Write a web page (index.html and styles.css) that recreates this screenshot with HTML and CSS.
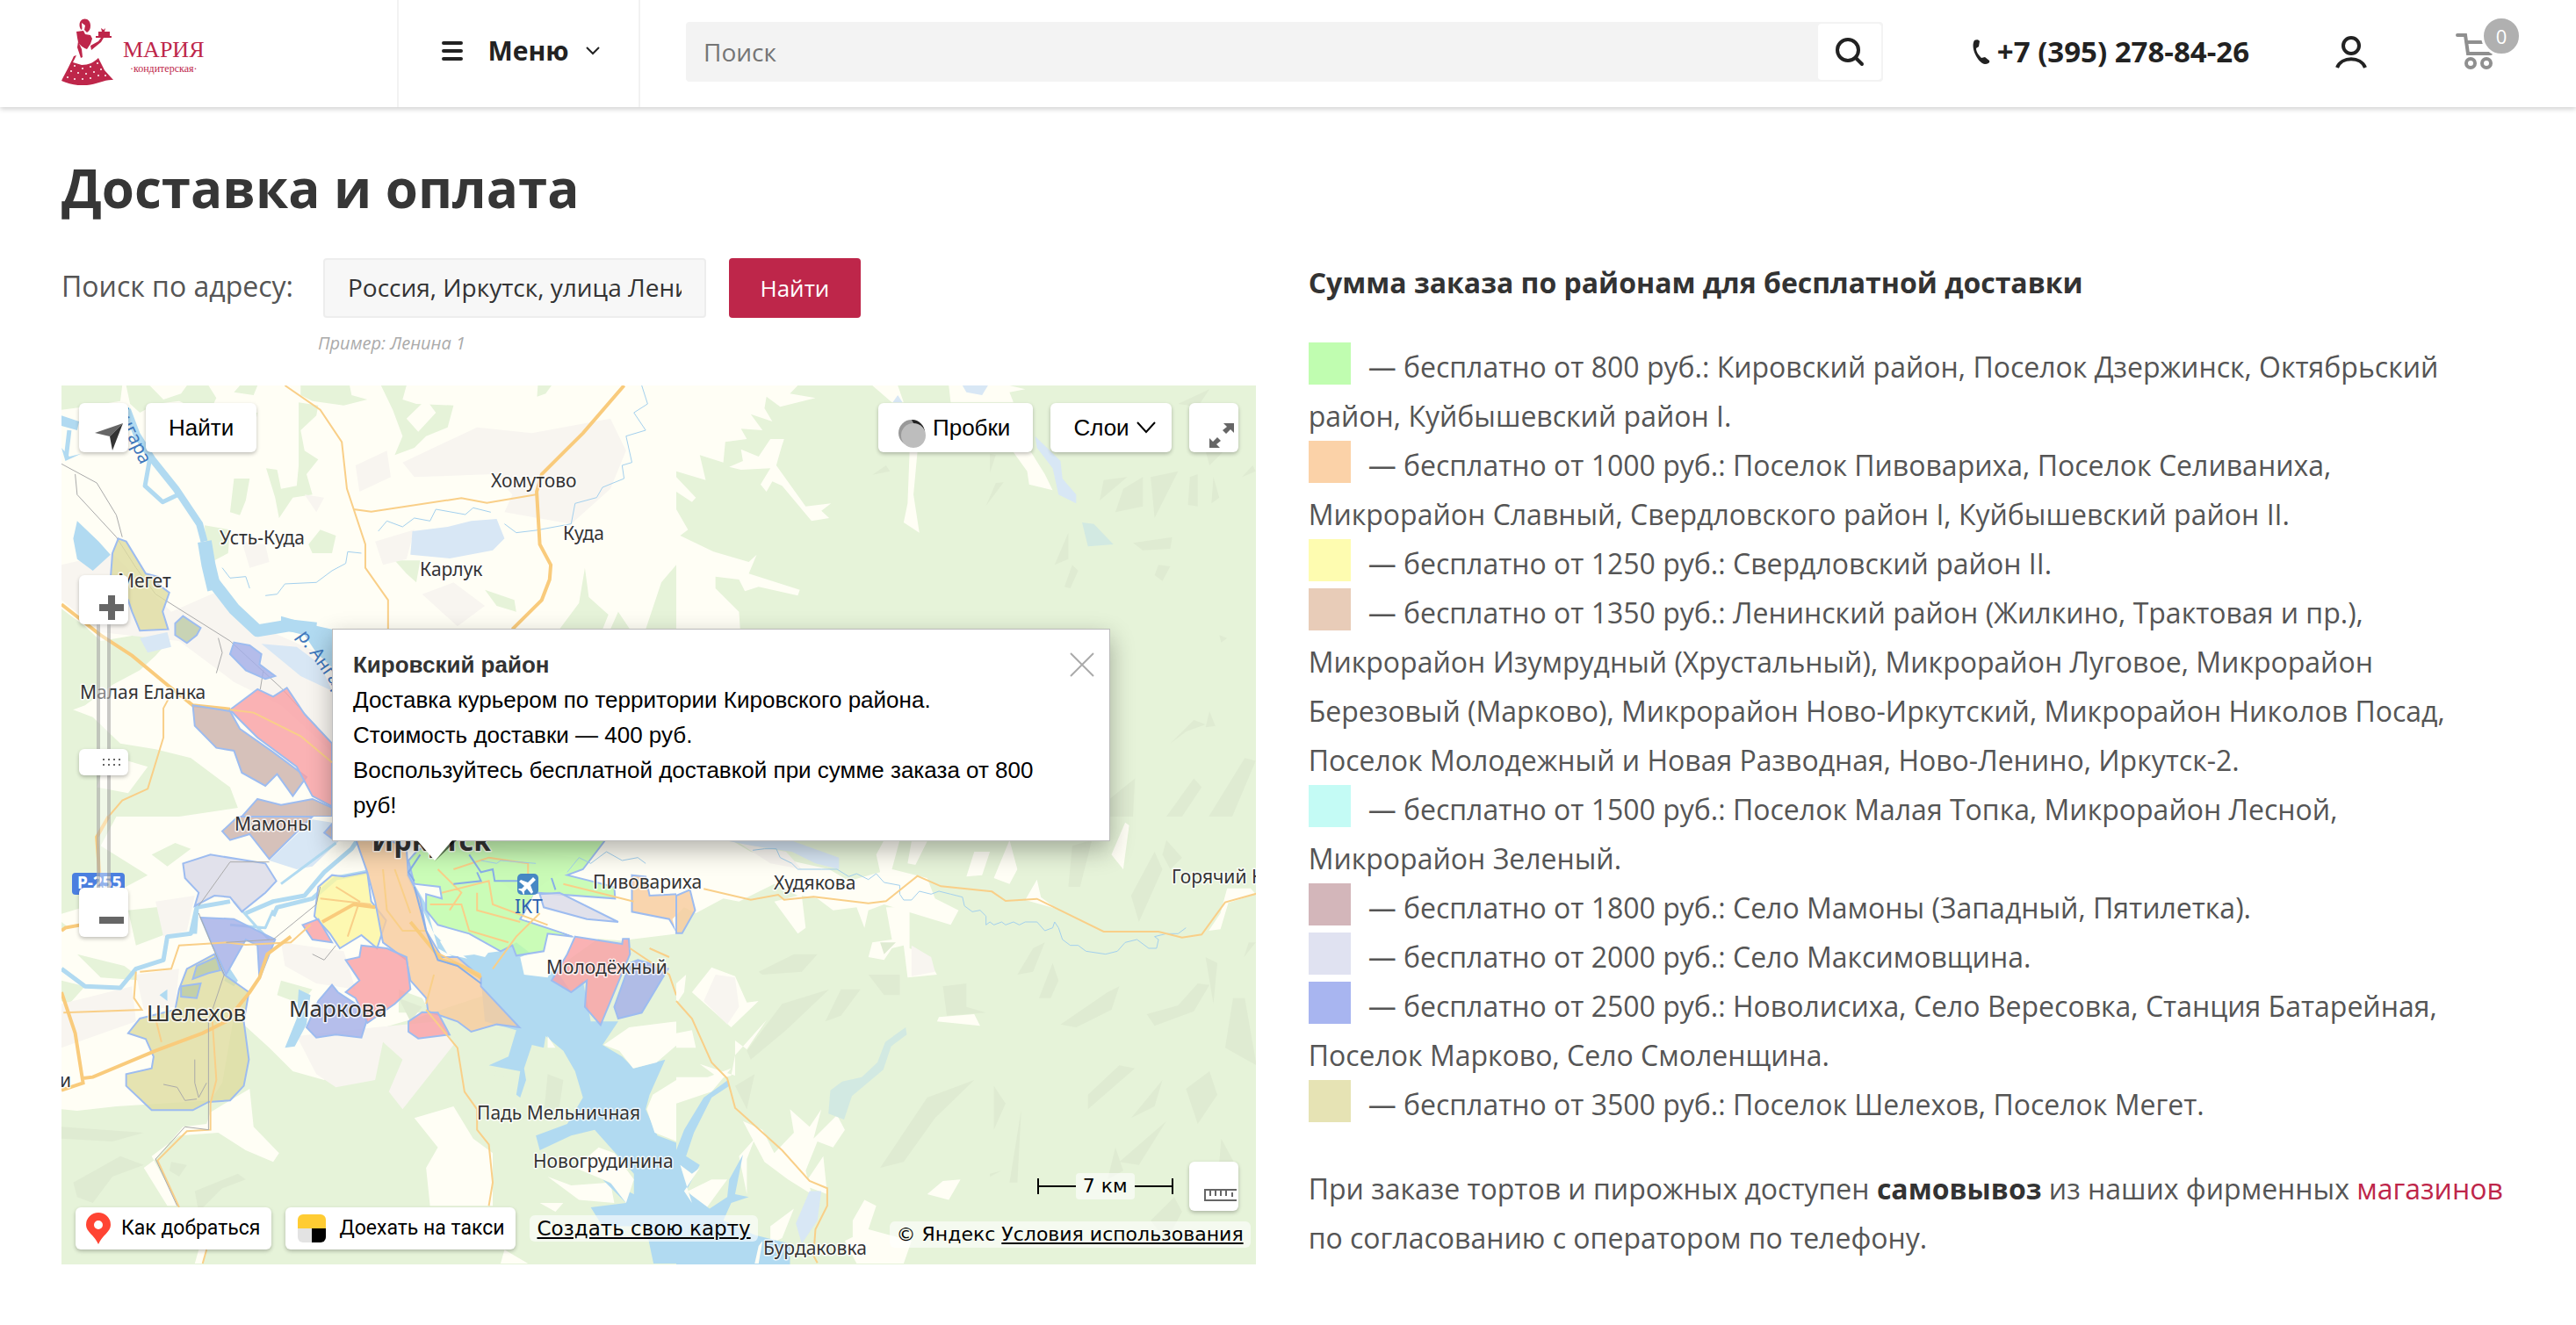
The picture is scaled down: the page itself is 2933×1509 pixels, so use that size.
FILE: index.html
```
<!DOCTYPE html>
<html lang="ru">
<head>
    <meta charset="UTF-8" />
    <meta name="viewport" content="width=device-width, initial-scale=1.0" />
    <title>Доставка и оплата</title>
    <link rel="stylesheet" href="styles.css">
</head>
<body>
    <header class="header">
        <a class="logo" href="#" aria-label="Мария, кондитерская">
            <svg class="logo-lady" viewBox="0 0 60 76" aria-hidden="true">
                <path d="M24 1c5-2 9 2 9 7 0 4-1 6-4 8l-3-3 1-5-4-3c0 3 1 6 0 8-3-2-4-9 1-12z" />
                <path d="M17 15l8-1 2 4 6 1 2 4-2 6-4 6c-3-1-8-4-10-8l-1-5z" />
                <path d="M19 26l4 9 1 9-2 1-4-12z" />
                <path d="M33 31l9-5 3-4h3l-3 5-11 9z" />
                <path d="M39 20h18v2H39zM42 15h13v5H42zM45 11l3 2 2-2-1 4h-3z" />
                <path d="M14 43l3-1-4 8 10 3c8 0 14-3 19-8l3 6 4 8 10 11c-9-1-19 5-30 6-10 1-20-1-29-5 4-8 10-19 14-28z" />
                <g class="logo-dots">
                    <circle cx="15" cy="54" r="1" /><circle cx="24" cy="57" r="1" /><circle cx="33" cy="55" r="1" /><circle cx="41" cy="51" r="1" />
                    <circle cx="11" cy="60" r="1" /><circle cx="19" cy="62" r="1" /><circle cx="28" cy="63" r="1" /><circle cx="37" cy="61" r="1" /><circle cx="45" cy="58" r="1" />
                    <circle cx="7" cy="67" r="1" /><circle cx="15" cy="69" r="1" /><circle cx="24" cy="69" r="1" /><circle cx="33" cy="68" r="1" /><circle cx="42" cy="65" r="1" /><circle cx="50" cy="65" r="1" />
                </g>
            </svg>
            <span class="logo-text">
                <span class="logo-name">МАРИЯ</span>
                <span class="logo-sub">·кондитерская·</span>
            </span>
        </a>
        <button class="menu-btn" type="button">
            <svg class="icon-burger" viewBox="0 0 24 22" aria-hidden="true"><path d="M2 2h20M2 11h20M2 20h20" /></svg>
            Меню
            <svg class="icon-chevron" viewBox="0 0 18 12" aria-hidden="true"><path d="M2 2l7 7 7-7" /></svg>
        </button>
        <form class="search" role="search">
            <input class="search-input" type="text" placeholder="Поиск" aria-label="Поиск" />
            <button class="search-btn" type="button" aria-label="Искать">
                <svg viewBox="0 0 34 34" aria-hidden="true"><circle cx="15" cy="15" r="12" /><path d="M24 24l7 7" /></svg>
            </button>
        </form>
        <a class="phone" href="tel:+73952788426">
            <svg viewBox="0 0 20 28" aria-hidden="true"><path d="M2 1c2-1 5-1 6 1l-1 6-3 2c0 4 3 8 6 11l4-1 5 4c1 2-1 4-5 4C6 27-3 9 2 1z" /></svg>
            +7 (395) 278-84-26
        </a>
        <a class="user" href="#" aria-label="Личный кабинет">
            <svg viewBox="0 0 36 38" aria-hidden="true"><circle cx="18" cy="12" r="9" /><path d="M2 37c5-13 27-13 32 0" /></svg>
        </a>
        <a class="cart" href="#" aria-label="Корзина">
            <svg viewBox="0 0 48 44" aria-hidden="true"><path d="M2 4h9l3 21h26M12 12h20" /><circle cx="17" cy="36" r="5" /><circle cx="35" cy="36" r="5" /></svg>
            <span class="cart-count">0</span>
        </a>
    </header>

    <main class="page">
        <h1>Доставка и оплата</h1>
        <div class="columns">
            <section>
                <form class="address">
                    <label for="address">Поиск по адресу:</label>
                    <input type="text" id="address" value="Россия, Иркутск, улица Ленина, 1" />
                    <button type="button">Найти</button>
                </form>
                <p class="hint">Пример: Ленина 1</p>

                <div class="map">
                    <svg class="map-canvas" viewBox="0 0 1360 1001" preserveAspectRatio="xMinYMin slice">
                        <!-- north-west tile -->
                        <g transform="translate(0 -9) scale(.4464 .3333)">
                            <path class="field" d="M0 0h1570v1500H0z" />
                            <path class="wood" d="M0 27h155l-5 53-90 20-60 10zM165 27h60l35 48 45-20 15-28h55l20 43-20 55-75-45-60 10-40 30-25-30zM455 27h45l-10 33-50-10zM610 27h125l5 33 40 15-60 20-80-15-30-20z" />
                            <path class="wood" d="M605 85l50 10-5 35-40 50 10 70 35 30-30 50 15 70-50 10-35 70-10-70-23-100 28 5 10 65 40-10 5-70zM815 27h65l-10 48 35 15 95 5-15 75-55 30-30 40-50 25 20-65-25-90zM1215 27h35l-15 28-22 10zM440 345h40l-10 75-15 50-25-10zM365 505l65 15-5 80-35 25-20-45zM660 520l40 20-10 60h-50l-10-30zM850 625h65l-10 75-25-30zM1080 725l75 35 5 40-50-20zM1335 650l10 100 50 60-15 50h-110l50-90zM1420 800l30 60h-50zM1568 640l-38 60-40 160h78zM470 120h30l-10 60-40 20z" />
                            <path class="wood" d="M0 790l60 60 40 50 90-20 90 10-40 60-40 50-70 50-70 70-60 30z M0 1120l80 40 70 90 90 20 90 30 100 100 20 70-150 30H0z" />
                            <path class="field" d="M930 75l25 45-45 65-30-45zM120 1290l100 40-50 90-80-20z" />
                            <path class="town" d="M870 290l190-120 140 20 200-50 40 110-40 130-100 120-170-40 20-60-50-70-200 10zM750 300l80-50 10 90-80 50zM800 560l100-40-20 100-60 20zM0 640l130-40 150 200 120-70 120 130 170 100v320l-130-160-120-80-140-140-200-30-100-110zM920 740l80-40 80 80-70 70zM460 560l60 10 10 60-50 20zM620 400l50 10-20 50z" />
                            <path class="lake-soft" d="M895 525l90-15 60-20 65-7 20 67-30 40-110 28-100-13zM200 890l70-20 10 50-60 20zM510 910l90 10 60 60 30 90-80-50z" />
                            <path class="water" d="M40 490l55 70 30 45-45 55-40-40-10-70zM560 815l80 30 50 15v130l-40-50-30-60-60-20zM0 130l45 20-5 30-40-15zM0 240l20 30 30-10-40 25z" />
                            <path class="river r8" d="M168 110l24 85 40 85 60 100 60 120 12 60" />
                            <path class="river r6" d="M225 280l-12 90 45 55 40-25M20 180l-8 90" />
                            <path class="river r14" d="M365 560l10 80 15 85" />
                            <path class="river r12" d="M388 700l52 90 60 75 80-18 70 10" />
                            <path class="stream" d="M1480 27l15 63-35 30 30 60-50 20 15 90-25 10 5 45-55 30-15 35-55 20-10 70-90 22-50 8-30-30M1095 460l-45-15-20 23-75-18-15 40-40-10-30 30-40-20-22 35M765 600l-35-5-5 40-35 25-40 40-80 5-20 35-30 5M410 650l20 35 40-5 10 40" />
                            <path class="road" d="M570 27l90 83 55 110 13 160 47 190v80l58 110v100M745 450l45 8 230-46 65 16 125-28M272 1100l-12 30v100l-40 175-65 40-35 55" />
                            <path class="road big" d="M1435 27l-105 163-105 140-13 60 8 180 28 70-3 50-20 70-75 100M0 775l100 105 80 70 90 100 65 70 95 13" />
                            <path class="rail" d="M0 295l90 65 50 110 15 75M35 330l5 70 100 145 50 105 50 90 190 160 130 160 130 190M400 890l10 50-15 70M515 1000l-8 65" />
                            <path class="zone olive" d="M145 550l20 10 50 110 30 10-5 20 35 35-17 65 14 60-72 5-20-65-10-40-45-70 5-90z" />
                            <path class="zone moss" d="M310 815l45 40-10 25-25 27-30-27v-40z" />
                            <path class="zone blue" d="M440 905l40 10 30 30-5 35 40 40-25 10-50-30-40-55z" />
                            <path class="zone brown" d="M335 1120l95 20 25 60 85 80 85 85-35 65-40-75-30 40-60-45-20-75-45-10-55-75zM500 1440l60 20 80-20 50 30v30H460z" />
                            <path class="zone red" d="M500 1065l40 25 35-30 45 90 70 100v215l-50-35-40-100-100-100-45-60-25-35z" />
                            <path class="road" d="M430 1135l60 10 120 80 80 90" />
                        </g>
                        <!-- north-east tile -->
                        <g transform="translate(700 -9) scale(.4464 .3333)">
                            <path class="wood" d="M0 0h1570v1500H0z" />
                            <path class="field" d="M0 27h310l-20 28 65 15-90 30-35-35-5 40 20 45-55-25 30 55-55-5 15 35-55 10-5 70-60-25 15 85-75-30zM0 340l50 70-10 15-40-35zM0 450l30 70-20 20 85 55 90 35 20-25-20 65 130 55-5 20-100-30-35 15-15-40-60-10v40l60 80 3 60v640H0z" />
                            <path class="field" d="M240 210h35l-5 20-15 70 75 140 65-10-25 25 20 25-45 10-75-120-25-15-15 35-15-25 25-55-75 5-30-10 35-20-5-40 45 25zM595 255h20l-10 145 15 130-40-35 10-65zM500 27h65l15 58h-30zM695 27h155l40 13-40 10 10 35H700zM860 255h45l35 75 20 55-60-20-5-45z" />
                            <path class="lake-soft" d="M730 27h65l-15 33-40-10zM915 200l65 85 5 60 35 55v30l-45-30-15-90-40-70zM565 60l12 25h-25z" />
                            <path class="lake" d="M1035 495l30 5 50 70-65 7z" />
                            <path class="shade" d="M535 300l10 20-45 12zM815 360l20-2-45 80zM800 260l15 5-15 60zM1090 350l60-10-70 80zM1140 380l50-40 0 100-70 20zM1210 340l70-20-60 160zM1310 340l20-10v110l-25-5zM1370 340l15 70-20 20zM1470 300l8 20-35 20zM1340 200l80 20-60 80zM1165 565l100-20-5 40-70 5zM1230 640l30 5-20 50-20-20zM1000 530v90l-35 20zM1010 640l15 20-20 60-15-5zM1385 880l20 10-15 15zM1320 1170l-60 80 40-40 50-25zM1360 1140l15 50-25 5zM1170 1370l-5 130h-60v-60zM1320 1370l20 30-50 100h-40zM1450 1300l28 10-60 190h-60zM1280 90l80-50-30 60z" />
                        </g>
                        <!-- south-west tile -->
                        <g transform="translate(0 491) scale(.4464 .3333)">
                            <path class="wood" d="M0 0h1570v1530H0z" />
                            <path class="field" d="M140 0h1430v260l-120 80-210 200-340 150-130 50-100 160-80-30-60-80-90-110-30 230-30 60-240 20-100 15-40-5-30-60V400l50-20-40-40 100-40 140-100-120-100z" />
                            <path class="wood" d="M40 470l120 40 50 50-110-10zM170 320l100-15v95l-80 40zM0 560l60 20-40 60-20-10zM230 130l60-40 40 20-60 60zM560 560l80 30-30 50-60-30zM860 590l60 30 20 50-80 0zM1000 700l130 20-20 90 60 30-80 40 60 10-20 120-80 10-40-120z" />
                            <path class="town" d="M190 540l110-20-10 130-80 10zM0 640l180-60 10 120-190 90zM560 430l160 30 30 130-100-20-80-60zM600 750l200-30 160-20 40 80-130 220-35-60 35-110-50-60-20 130-100 25-50-45zM950 60l400 90 60 100-200 60zM240 290l100-20-20 120-60 20z" />
                            <path class="field" d="M1000 990l50 110 50 50v180H940l-10-130 30-70-60-100zM380 1010l100-80 10 130 65 90-15 30-70-40-70-60-100 10-70 70 70 170h-30l-60-130 30-30 70-110 60-10zM1240 1230l60 30 100-10 10 70-90-10zM350 1480h20l-10 47h-20zM1130 1480l60 47h-70zM1220 1320h60l-20 30z" />
                            <path class="shade" d="M30 1250l120-90 60 30-80 40-50 90-40-20zM280 1180l40 10-20 40-25-20zM340 1280l110-60 20 20-60 30-60 80zM0 1060l210 20-80 30-130-10zM860 620l60 30-30 50zM1240 880l40 20-10 90-40 30z" />
                            <path class="lake-soft" d="M530 150L640 10l50 10 20 60-70 90-40 10z" />
                            <path class="water" d="M885 150l15 80 30 70 30 150 40 30 120-20 40-30 40 40 70 70 30 60 30-40 20 140 70 0-40 80 50 40 30 40 80-30-40 120-10 50 30 90 50 25v412h-60l-20-127-110 0-30-65 90-15-60-80 80 50v-70l-60-90-40-60-60 20-80 50-10-50 80-40 40-90-20-90-30-70-45-50-5 40-30-10-20 80 5 40-15 60-10-10 10-80-80-20 50-30 20-90-80-30-10-140-60-80-60-80-70-200z" />
                            <path class="water" d="M605 590l30 20-10 100-30 75-25 5 30-100zM430 520l20 40-10 20-25-20zM250 610l20-20v40z" />
                            <path class="field" d="M965 425l50-10-10 40 30 30-50-15zM1050 430l50 15-20 35-30-10zM1170 480l120-60-50 130-60-10zM1240 750l20 40-20 0z" />
                            <path class="river r6" d="M0 520l60 60 90 5 40-65 70-30 10-80 60-10 15-90 85-20M340 400l5-90M470 330l70-40 80-20 50-80 70-80 15-30M540 340l10-30 90-30 60-70 80-20" />
                            <path class="river r4" d="M430 370l90 10 20-60M560 230l80-80 60-60M440 290l60 90 30 40" />
                            <path class="field" d="M1385 80h185v320l-120 20-220-50-60-20 30-90 60-60 30-20z M1568 700l-120 20-65 60 40 20 35 60 60-20 52-60zM1568 900l-60 50-15 50 20 80 57 30zM1370 1130l40 20 50 90-20 80-40-70-90-50z" />
                            <path class="wood" d="M1450 430l120 60v210l-130 0z" />
                            <path class="zone olive" d="M320 520l70-50 25 70 63 60-13 100 13 130-13 90-35 50-55 5-40 28H230l-65-83v-40l65-20 5-40-20-60-45-20 30-50 90-30 10-70z" />
                            <path class="zone moss" d="M345 510l50-30 10 45-30 10-40 20zM305 580l50-10-10 50-40-5z" />
                            <path class="zone lavender" d="M310 160l70-30 140 30 28 60-28 40-60 65-30-50-40-5-50 35 10-45-35-50z" />
                            <path class="zone brown" d="M410 50L450 0h190L530 145 480 60l-50 20zM670 55l20-30v50z" />
                            <path class="zone blue" d="M355 345l85 5 105 70-40 135-5-115-30-20-50 120-35-100zM690 575l15 25 45 40 30 50-15 65-65-10-50 10-25-35 30-90zM1470 490l77 30-67 150-60 20-10-40 40-150z" />
                            <path class="zone green" d="M905 120l55-50 430 5-60 105-40 20 120 40 2 40-202-20-40 90 135 60-65-10-10 60-70 15-10-35-30 20-80-60-80-30-30-50v-55l40 15-5-40-65-10-15-80z" />
                            <path class="field" d="M1205 265l240 25-5 135-130-15-80-40-55-20z" />
                            <path class="zone lavender" d="M1220 265l50-5 150 100-80-10-110-40z" />
                            <path class="zone yellow" d="M655 240l35-40 30 5 60-15 10 100 38 65-23 95-40-45-55 45-25-50-40-60z" />
                            <path class="zone orange" d="M750 75h80l50 35 5 90 30 80 15 110 40 90h40l60 70v30l98 140-58-10-65 25-35-35-75-35-5-45-40-60-10-70-60-60-20-140-20-100zM1455 200l35 5 10 65 70-5v130l-20-45-95-25z" />
                            <path class="zone red" d="M765 440l65 10 50 30 10 110-40 50-70 65-30-85-25-20 35-40-35-70 35-10zM885 700l35-32 40 2 30 75-80 13-25-23zM615 370l40-20 35 80-50-10zM1310 410l120 25 2-17h15l3 52-75 242-40-62 5-90-40 40-50-40 40-90z" />
                            <path class="road" d="M200 530l80-10 20-80 120-10 50 8 115-8 50-60M190 530l-5 90 20 40-200 10M240 690l15 80M930 660l80 130 18 150 32 60v70l30 50 10 130-10 80M820 180l10 140 40 70h60l20 70 120 80M890 330l-40-150M940 300l80 0 20 90 100 40M970 260l120-40 10 80 140 70M960 180l60 80-30 60M1000 180l90-40 100 20v80M1060 260l0 60 110 40M700 240l60 50-30 120M660 280l130 20M950 540l-20 100M1280 230l180 60M1100 520l60-110 60-80M1450 450l100 90 18 70M385 700l10 200-15 80 0 90-60 5-75 100 55 160M370 1480l-10 47M1500 450l50 30" />
                            <path class="road big" d="M0 600l35 140 20 170-55 25M50 895l30-5 160-90 120-60 60-40 60-100 25-50 20-80 60-60M665 360l80-60 55 10M890 360l80 130 50 20 50 40M120 0l-30 70 10 180-10 110-80 20-10 10" />
                            <path class="rail" d="M350 330l65 210-40 160v370l-60-10-75 110 55 160M420 430l120-10 110-120 10-60M530 155l-100 0-80 150M340 830v80l10 50 20-50M260 915l35 10 20 45 30-5M640 470l30 20 30-50" />
                            <path class="border" d="M915 130l-30 60 15 30M900 240l30 150 30 100 50 20 60 60M1040 130l30 60 30-10 5 40 60 0M1060 190l10 30-70 10M1250 210l10 40" />
                            <path class="stream" d="M1070 150l40 10 10-10 90 10M1290 190l30-50 30 20 40-40 40 30 40-10 20 20" />
                        </g>
                        <!-- south-east tile -->
                        <g transform="translate(700 491) scale(.4464 .3333)">
                            <path class="wood" d="M0 0h1570v1530H0z" />
                            <path class="field" d="M0 70l140 10 50 40 200 60 50 40 80-30-10-60 20-50h40l-20 100 90 30 20 70 60 40-20 50-170-70-40 20-10 60-20-70-60 10-40-40-40-10 10 110-20 20-60-110 60-20-60-40-90 60-40-10-70 50-30-20-30 40L0 400z" />
                            <path class="field" d="M535 310h60v140l40 20 30 70-75 10-10-110-30 10-20 40-40-10 10-50 50-10zM600 85h40l-30 80-20-5zM760 120l40 0-20 80-40 5zM850 80l20 100-20 50-40-20zM920 215l10 60 40 40-80-30zM1145 20l10 10-15 150-30-50zM1405 245l60 0 13 20-70 30-20 90-30 5 30-60zM90 515l60 30 30 90 30-5-70 90-100-120zM0 570l25-30-5 60-20 40zM670 685l90-10 15 40-110-15zM680 1245l45-5-30 70-55-20zM230 695l-80 120-10 70-30 10-50-50 90 40v-120l30 30zM0 740l40-10 10 60-50 0zM0 890l80 0 60-30-50 80-90 40zM170 1040l50 30 30 80 50-70-10-80 50 60 30-60-20 100 60-80 20 50-30 60-40-20-30 100 15 80-60-50-60-60zM160 1160l40-60-20 70 0 120zM90 1240l40 0-60 110-40-70zM375 1160l10 130-60-30zM480 1310l30 20-20 80-40 50 0-80zM240 1400l60-60-30 100-30 20zM430 1450l60-40 110 40-20 77h-120z" />
                            <path class="town" d="M100 540l50 10 10 100-30 60-60-80zM600 440l50 40 10 50-60 15zM160 90l120 30 40 60-80-20z" />
                            <path class="lake-soft" d="M120 80h170l125 60v40l-60-20-60-40-100-20zM340 1280l30 0-10 100-40 80-15-70z" />
                            <path class="lake" d="M585 720l3 25-40 40-20 80-80 90-20 80-40-20 5-80 30-30 50-15 40-50 20-70z" />
                            <path class="shade" d="M210 530l90-60 60 0-40 60-100 10zM490 540h80v70h-40zM680 580l60-10v80l50 20-100 10zM270 640l120-50-110 140-90 100-10-30zM420 590l50 0-50 90-40 20zM640 960l120-60-100 130-80 150-60 20 30-60zM810 920l30 60-30 90zM880 1000l-10 250-20 0zM910 450l30-20-30 100-40 10zM960 500l15 60-20 60-30 0zM1100 600l30-20-20 80-90 60-40-10zM1330 570l30 5-40 90-100 50-20-40 80-30zM1170 860l-60 70-60 70 0-50 80-100zM1250 1040l-70 150-50-10zM1240 900l-20 90-60 40zM1350 480l30 20-10 140zM1460 430l18 0-30 50zM1420 620l30 0 30 230-80-60zM1120 1130l20 80-40 30zM1210 1380l60-80 20 50-40 100zM1390 1100l40 100-50 60zM800 1220l30-10-30 20zM1250 80l40 60-30 40-20-50zM1010 100l50-20-30 160-30 0zM1160 270l60-150 20 60-60 180zM1300 930l60-60 20 80-50 100zM200 880l-20 120-30-80zM560 430l-30 40-10-40z" />
                            <path class="water" d="M0 1140l20-70 50-110 62-60 3 20-45 40-45 120-20 80 35 30-35 90 60 60 45-40 5-60 35-85-20 135 35 10-45 20-20 60 80 50 90 30v87H0z" />
                            <path class="field" d="M10 1190l30 30 20-20-40 80 20 40zM220 1450l-10 77h-10l10-60z" />
                            <path class="zone orange" d="M0 270l35-20 13 70-33 78H0z" />
                            <path class="stream" d="M195 115l30-5 30 0 10 30 30 20 15 20 60 0 40 0 30 25 20-10 30 20 20-20 20 30 40 10 0 30 10 20 20 0 20-30 30 10 20-10 30 10 30 10 5 30 20 20 20-5 15 20 0 30 10-10 10 10 20-10 10 10 20-10 15 10 15-10 30 0 20 30 20-10 5-20 10 20 10 40 20 20 20 0 20 20 50 10 30-10 20-30 30-10 30 30 20 0 5-30-10-10 30-10 30 0 20-20" />
                            <path class="road" d="M70 247l120 37 70-17 15 17 75-10 140 22 45-7 80-86 60 35 130 18 35 32 80-7 170 112h140l60 20 50-10 60-110 80-30M0 630l40 60 50 150 40 55 20 100 120 145 70 105 45 25v60l-30 80-5 90 10 25" />
                        </g>

                        <!-- road number and airport badge -->
                        <rect class="shield" x="12" y="555" width="60" height="25" rx="4" />
                        <text class="shield-text" x="18" y="573">Р-255</text>
                        <rect class="airport" x="519" y="556" width="24" height="24" rx="5" />
                        <path class="plane" d="M537 560l-6 6-8-3-2 2 6 5-3 3h-3l-1 1 4 2 2 4 1-1v-3l3-3 5 6 2-2-3-8 6-6z" />

                        <g class="place">
                            <text x="489" y="116">Хомутово</text>
                            <text x="180" y="181">Усть-Куда</text>
                            <text x="571" y="176">Куда</text>
                            <text x="408" y="217">Карлук</text>
                            <text x="64" y="230">Мегет</text>
                            <text x="21" y="357">Малая Еланка</text>
                            <text x="197" y="507">Мамоны</text>
                            <text x="605" y="573">Пивовариха</text>
                            <text x="552" y="670">Молодёжный</text>
                            <text x="473" y="836">Падь Мельничная</text>
                            <text x="537" y="891">Новогрудинина</text>
                            <text x="811" y="574">Худякова</text>
                            <text x="1264" y="567">Горячий Ключ</text>
                            <text x="799" y="990">Бурдаковка</text>
                            <text x="-2" y="799">и</text>
                        </g>
                        <g class="place large">
                            <text x="97" y="724">Шелехов</text>
                            <text x="259" y="719">Маркова</text>
                        </g>
                        <text class="city" x="353" y="530">Иркутск</text>
                        <text class="code" x="516" y="601">IKT</text>
                        <text class="river-name" transform="translate(268 285) rotate(55)">р. Ангара</text>
                        <text class="river-name" transform="translate(60 26) rotate(65)">Ангара</text>
                    </svg>

                    <div class="map-top">
                        <button class="map-btn square" type="button" aria-label="Моё местоположение">
                            <svg viewBox="0 0 56 56" aria-hidden="true"><path fill="#666" d="M50 23L18 34l17 4z" /><path fill="#333" d="M50 23L35 38l3 16z" /></svg>
                        </button>
                        <button class="map-btn" type="button">Найти</button>
                        <span class="spacer"></span>
                        <button class="map-btn traffic" type="button">
                            <svg viewBox="0 0 34 36" aria-hidden="true"><circle cx="16" cy="18" r="15" fill="#999" /><path d="M16 3a15 15 0 0 1 15 15l-6 2z" fill="#222" /><circle cx="18" cy="21" r="14" fill="#bdbdbd" /></svg>
                            Пробки
                        </button>
                        <button class="map-btn layers" type="button">
                            Слои
                            <svg viewBox="0 0 22 14" aria-hidden="true"><path d="M1 1l10 11L21 1" /></svg>
                        </button>
                        <button class="map-btn square" type="button" aria-label="На весь экран">
                            <svg viewBox="0 0 56 56" aria-hidden="true"><path fill="#666" d="M51 23v11l-4-4-5 5-4-4 5-4-4-4zM23 51V40l4 4 5-5 4 4-5 4 4 4z" /></svg>
                        </button>
                    </div>

                    <div class="zoom">
                        <button class="map-btn square" type="button" aria-label="Приблизить">
                            <svg viewBox="0 0 56 56" aria-hidden="true"><path fill="#666" d="M33 23h8v10h10v8H41v10h-8V41H23v-8h10z" /></svg>
                        </button>
                        <div class="zoom-track">
                            <button class="zoom-handle" type="button" aria-label="Масштаб">
                                <svg viewBox="0 0 56 30" aria-hidden="true"><path d="M27 12h22M27 18h22" /></svg>
                            </button>
                        </div>
                        <button class="map-btn square" type="button" aria-label="Отдалить">
                            <svg viewBox="0 0 56 56" aria-hidden="true"><path fill="#666" d="M23 33h28v8H23z" /></svg>
                        </button>
                    </div>

                    <div class="balloon">
                        <button class="balloon-close" type="button" aria-label="Закрыть">
                            <svg viewBox="0 0 28 28" aria-hidden="true"><path d="M1 1l26 26M27 1L1 27" /></svg>
                        </button>
                        <strong>Кировский район</strong><br>
                        Доставка курьером по территории Кировского района.<br>
                        Стоимость доставки — 400 руб.<br>
                        Воспользуйтесь бесплатной доставкой при сумме заказа от 800 руб!
                        <svg class="balloon-tail" viewBox="0 0 46 26" aria-hidden="true"><path fill="#fff" d="M0 0h40L20 23z" /><path fill="#000" fill-opacity=".55" d="M40 0h5L20 24z" /></svg>
                    </div>

                    <div class="map-left">
                        <button class="route-btn" type="button">
                            <svg class="pin" viewBox="0 0 28 36" aria-hidden="true"><path fill="#f43" fill-rule="evenodd" d="M14 0a14 14 0 0 1 14 14c0 8-9 11-14 22C9 25 0 22 0 14A14 14 0 0 1 14 0zm0 9a5 5 0 1 0 0 10 5 5 0 0 0 0-10z" /></svg>
                            Как добраться
                        </button>
                        <button class="route-btn" type="button">
                            <svg class="taxi" viewBox="0 0 32 32" aria-hidden="true"><path fill="#ffcc33" d="M6 0h20a6 6 0 0 1 6 6v10H0V6a6 6 0 0 1 6-6z" /><path fill="#e3e3e3" d="M0 16h16v16H6a6 6 0 0 1-6-6z" /><path d="M16 16h16v10a6 6 0 0 1-6 6H16z" /></svg>
                            Доехать на такси
                        </button>
                        <a class="own-map" href="#">Создать свою карту</a>
                    </div>

                    <div class="map-scale">
                        <span class="scale-line left"></span>
                        <span class="scale-label">7 км</span>
                        <span class="scale-line right"></span>
                        <button class="map-btn square" type="button" aria-label="Линейка">
                            <svg viewBox="0 0 56 56" aria-hidden="true"><path class="ruler" d="M54 32H18v12h36M24 32v7M30 32v7M36 32v7M42 32v7M49 35v5" /></svg>
                        </button>
                    </div>
                    <div class="copyright">© Яндекс <a href="#">Условия использования</a></div>
                </div>
            </section>

            <section class="zones">
                <h2>Сумма заказа по районам для бесплатной доставки</h2>
                <ul>
                    <li><span class="swatch c800"></span>— бесплатно от 800 руб.: Кировский район, Поселок Дзержинск, Октябрьский район, Куйбышевский район I.</li>
                    <li><span class="swatch c1000"></span>— бесплатно от 1000 руб.: Поселок Пивовариха, Поселок Селиваниха, Микрорайон Славный, Свердловского район I, Куйбышевский район II.</li>
                    <li><span class="swatch c1250"></span>— бесплатно от 1250 руб.: Свердловский район II.</li>
                    <li><span class="swatch c1350"></span>— бесплатно от 1350 руб.: Ленинский район (Жилкино, Трактовая и пр.), Микрорайон Изумрудный (Хрустальный), Микрорайон Луговое, Микрорайон Березовый (Марково), Микрорайон Ново-Иркутский, Микрорайон Николов Посад, Поселок Молодежный и Новая Разводная, Ново-Ленино, Иркутск-2.</li>
                    <li><span class="swatch c1500"></span>— бесплатно от 1500 руб.: Поселок Малая Топка, Микрорайон Лесной, Микрорайон Зеленый.</li>
                    <li><span class="swatch c1800"></span>— бесплатно от 1800 руб.: Село Мамоны (Западный, Пятилетка).</li>
                    <li><span class="swatch c2000"></span>— бесплатно от 2000 руб.: Село Максимовщина.</li>
                    <li><span class="swatch c2500"></span>— бесплатно от 2500 руб.: Новолисиха, Село Вересовка, Станция Батарейная, Поселок Марково, Село Смоленщина.</li>
                    <li><span class="swatch c3500"></span>— бесплатно от 3500 руб.: Поселок Шелехов, Поселок Мегет.</li>
                </ul>
                <p>При заказе тортов и пирожных доступен <strong>самовывоз</strong> из наших фирменных <a href="#">магазинов</a> по согласованию с оператором по телефону.</p>
            </section>
        </div>
    </main>
</body>
</html>
```
FILE: styles.css
```
* {
    box-sizing: border-box;
}
body {
    margin: 0;
    background: #fff;
    color: #555;
    font-family: "Open Sans", "Noto Sans", sans-serif;
    font-size: 32px;
    line-height: 56px;
}
button {
    border: none;
    background: none;
    padding: 0;
    font: inherit;
    color: inherit;
    cursor: pointer;
}
svg {
    display: block;
    flex: none;
}
a {
    color: #be264a;
    text-decoration: none;
}

/* header */
.header {
    display: flex;
    align-items: center;
    height: 122px;
    padding: 0 65px 0 70px;
    box-shadow: 0 2px 6px rgba(0,0,0,0.2);
}
.logo {
    display: flex;
    align-items: center;
    width: 382px;
    gap: 10px;
    padding-bottom: 4px;
    font-family: "Liberation Serif", serif;
}
.logo-lady {
    width: 60px;
    height: 76px;
    fill: #be264a;
}
.logo-dots {
    fill: #fff;
}
.logo-text {
    display: flex;
    flex-direction: column;
    align-items: center;
    padding-top: 10px;
}
.logo-name {
    font-size: 26px;
    line-height: 28px;
}
.logo-sub {
    font-size: 12px;
    line-height: 14px;
}
.menu-btn {
    display: flex;
    align-items: center;
    justify-content: center;
    gap: 18px;
    width: 277px;
    height: 122px;
    padding: 0 0 6px 6px;
    border-left: 2px solid #f2f2f2;
    border-right: 2px solid #f2f2f2;
    color: #222;
    font-size: 30px;
    font-weight: 700;
}
.icon-burger {
    width: 24px;
    height: 22px;
    margin-right: 10px;
    stroke: #222;
    stroke-width: 4;
    stroke-linecap: round;
}
.icon-chevron {
    width: 18px;
    height: 12px;
    fill: none;
    stroke: #222;
    stroke-width: 2;
}
.search {
    display: flex;
    flex: 1;
    height: 68px;
    margin: 0 102px 4px 52px;
    border: 2px solid #f3f3f3;
    border-radius: 4px;
    background: #f3f3f3;
}
.search-input {
    flex: 1;
    min-width: 0;
    border: none;
    background: none;
    padding: 0 18px;
    color: #333;
    font-family: inherit;
    font-size: 28px;
}
.search-input::placeholder {
    color: #757575;
}
.search-btn {
    display: grid;
    place-items: center;
    width: 72px;
    border-radius: 4px;
    background: #fff;
}
.search-btn svg {
    width: 34px;
    height: 34px;
    fill: none;
    stroke: #222;
    stroke-width: 4;
    stroke-linecap: round;
}
.phone {
    display: flex;
    align-items: center;
    gap: 8px;
    margin-right: 98px;
    padding-bottom: 4px;
    color: #222;
    font-size: 33px;
    font-weight: 700;
    white-space: nowrap;
}
.phone svg {
    width: 20px;
    height: 28px;
    fill: #222;
}
.user {
    margin-right: 101px;
}
.user svg {
    width: 36px;
    height: 38px;
    margin-bottom: 4px;
    fill: none;
    stroke: #222;
    stroke-width: 4;
}
.cart {
    position: relative;
    width: 72px;
}
.cart svg {
    width: 48px;
    height: 44px;
    margin-bottom: 6px;
    fill: none;
    stroke: #8f8f8f;
    stroke-width: 4;
    stroke-linecap: round;
}
.cart-count {
    position: absolute;
    top: -18px;
    right: -3px;
    width: 46px;
    height: 46px;
    border: 3px solid #fff;
    border-radius: 50%;
    background: #b0b0b0;
    color: #fff;
    font-size: 22px;
    line-height: 40px;
    text-align: center;
}

/* page */
.page {
    padding: 50px 70px 60px;
}
h1 {
    margin: 0 0 38px;
    color: #363636;
    font-size: 60px;
    line-height: 84px;
    font-weight: 700;
}
.columns {
    display: grid;
    grid-template-columns: 99fr 100fr;
    gap: 60px;
}
.address {
    display: flex;
    align-items: center;
    height: 68px;
}
.address label {
    margin-right: 34px;
    padding-bottom: 4px;
}
.address input {
    width: 436px;
    height: 68px;
    margin-right: 26px;
    padding: 0 26px 2px;
    border: 2px solid #ededed;
    border-radius: 4px;
    background: #f7f7f7;
    color: #333;
    font-family: inherit;
    font-size: 28px;
}
.address button {
    width: 150px;
    height: 68px;
    border-radius: 4px;
    background: #be264a;
    color: #fff;
    font-size: 26px;
}
.hint {
    margin: 15px 0 34px 292px;
    color: #aaa;
    font-size: 20px;
    line-height: 28px;
    font-style: italic;
}

/* map */
.map {
    position: relative;
    height: 1001px;
    overflow: hidden;
    color: #000;
    font-family: "Liberation Sans", sans-serif;
    font-size: 26px;
}
.map-canvas {
    width: 100%;
    height: 100%;
}
.map-canvas path {
    vector-effect: non-scaling-stroke;
}
.field { fill: #fffef5; }
.wood { fill: #e6f3d9; }
.town { fill: #f8f5f0; }
.shade { fill: #dfebd2; }
.water { fill: #b1daf1; }
.lake { fill: #d2e9e2; }
.lake-soft { fill: #d8e7f5; }
.river {
    fill: none;
    stroke: #b1daf1;
    stroke-linejoin: round;
}
.r4 { stroke-width: 3; }
.r6 { stroke-width: 5; }
.r8 { stroke-width: 8; }
.r12 { stroke-width: 14; }
.r14 { stroke-width: 16; }
.stream {
    fill: none;
    stroke: #a3d0ee;
    stroke-width: 1;
}
.road {
    fill: none;
    stroke: #f9cf88;
    stroke-width: 2;
}
.road.big {
    stroke: #f9cb7c;
    stroke-width: 4;
}
.rail {
    fill: none;
    stroke: #aaa;
    stroke-width: 1;
}
.border {
    fill: none;
    stroke: #88aee8;
    stroke-width: 2;
}
.zone {
    fill-opacity: 0.8;
    stroke: #9dbcf0;
    stroke-width: 2;
}
.zone.olive { fill: #dfdca0; }
.zone.moss { fill: #bccba6; }
.zone.blue { fill: #a3aee8; }
.zone.brown { fill: #ccb1ab; }
.zone.red { fill: #f99fa4; }
.zone.lavender { fill: #d9d9e8; }
.zone.green { fill: #bdfba8; }
.zone.yellow { fill: #fdf6a0; }
.zone.orange { fill: #f8ca9c; }
.shield { fill: #4b7fe0; }
.shield-text {
    fill: #fff;
    font: 700 19px "Noto Sans", sans-serif;
}
.airport { fill: #4788c4; }
.plane { fill: #fff; }
.place, .city {
    fill: #333;
    stroke: #fff;
    stroke-opacity: 0.8;
    stroke-width: 3;
    stroke-linejoin: round;
    paint-order: stroke;
    font: 21px "Noto Sans", sans-serif;
}
.place.large {
    font-size: 26px;
}
.city {
    font-size: 32px;
    font-weight: 700;
}
.code {
    fill: #2a5fae;
    font: 21px "Noto Sans", sans-serif;
}
.river-name {
    fill: #3f78bd;
    font: 21px "Noto Sans", sans-serif;
}
.map-btn, .zoom-handle, .route-btn {
    border-radius: 6px;
    background: #fff;
    box-shadow: 0 2px 4px rgba(0,0,0,0.25);
}
.map-btn {
    display: flex;
    align-items: center;
    height: 56px;
    padding: 0 26px;
}
.map-btn.square {
    width: 56px;
    padding: 0;
}
.square svg {
    width: 56px;
    height: 56px;
}
.map-top {
    position: absolute;
    top: 20px;
    left: 20px;
    right: 20px;
    display: flex;
    gap: 20px;
}
.spacer {
    flex: 1;
}
.map-btn.traffic {
    gap: 6px;
    padding-left: 22px;
}
.traffic svg {
    width: 34px;
    height: 36px;
    margin-top: 12px;
}
.map-btn.layers {
    gap: 8px;
    padding-right: 18px;
}
.layers svg {
    width: 22px;
    height: 14px;
    fill: none;
    stroke: #000;
    stroke-width: 2;
}
.zoom {
    position: absolute;
    top: 216px;
    left: 20px;
}
.zoom-track {
    width: 16px;
    height: 300px;
    margin-left: 20px;
    padding-top: 142px;
    border: solid rgba(120,120,120,0.4);
    border-width: 0 4px;
    background: rgba(255,255,255,0.4);
}
.zoom-handle {
    display: block;
    width: 56px;
    height: 30px;
    margin-left: -24px;
}
.zoom-handle svg {
    width: 56px;
    height: 30px;
    stroke: #666;
    stroke-width: 2;
    stroke-dasharray: 2 4;
}
.balloon {
    position: absolute;
    top: 277px;
    left: 308px;
    width: 886px;
    padding: 20px 70px 20px 23px;
    border: 1px solid #bbb;
    background: #fff;
    box-shadow: 0 10px 26px rgba(0,0,0,0.3);
    line-height: 40px;
}
.balloon strong {
    color: #333;
}
.balloon-close {
    position: absolute;
    top: 26px;
    right: 17px;
}
.balloon-close svg {
    width: 28px;
    height: 28px;
    stroke: #aaa;
    stroke-width: 2;
}
.balloon-tail {
    position: absolute;
    top: 100%;
    left: 96px;
    width: 46px;
    height: 26px;
}
.map-left {
    position: absolute;
    bottom: 17px;
    left: 16px;
    display: flex;
    align-items: center;
    gap: 16px;
}
.route-btn {
    display: flex;
    align-items: center;
    gap: 12px;
    height: 48px;
    padding: 0 13px 0 12px;
    font-family: Roboto, sans-serif;
    font-size: 23px;
}
.pin {
    width: 28px;
    height: 36px;
}
.taxi {
    width: 32px;
    height: 32px;
    margin: 0 3px 0 2px;
}
.own-map, .copyright {
    padding: 0 8px;
    border-radius: 6px;
    background: rgba(255,255,255,0.6);
    color: #000;
    font-family: "DejaVu Sans", sans-serif;
    font-size: 22px;
    line-height: 30px;
}
.own-map {
    font-size: 23px;
}
.own-map, .copyright a {
    color: #000;
    text-decoration: underline;
}
.copyright {
    position: absolute;
    right: 6px;
    bottom: 19px;
}
.map-scale {
    position: absolute;
    right: 20px;
    bottom: 61px;
    display: flex;
    align-items: center;
    font-family: "DejaVu Sans", sans-serif;
    font-size: 22px;
}
.scale-line {
    width: 44px;
    height: 18px;
    background: linear-gradient(#000, #000) center / 100% 2px no-repeat;
}
.scale-line.left {
    border-left: 2px solid #000;
}
.scale-line.right {
    margin-right: 18px;
    border-right: 2px solid #000;
}
.scale-label {
    padding: 0 8px;
    border-radius: 4px;
    background: rgba(255,255,255,0.6);
    line-height: 30px;
}
.ruler {
    fill: none;
    stroke: #666;
    stroke-width: 2;
}

/* price list */
.zones h2 {
    margin: 0 0 40px;
    color: #333;
    font-size: 32px;
    line-height: 56px;
    font-weight: 700;
}
.zones ul {
    margin: 0 0 40px;
    padding: 0;
    list-style: none;
}
.zones p {
    margin: 0;
}
.zones strong {
    color: #333;
}
.swatch {
    display: inline-block;
    width: 48px;
    height: 48px;
    margin-right: 20px;
    vertical-align: top;
}
.c800 { background: #c0fdb0; }
.c1000 { background: #fbd2a8; }
.c1250 { background: #fefcb0; }
.c1350 { background: #e8ccb8; }
.c1500 { background: #c4fbf5; }
.c1800 { background: #d3b6ba; }
.c2000 { background: #e0e2f1; }
.c2500 { background: #a8b5f0; }
.c3500 { background: #e6e3b4; }
```
